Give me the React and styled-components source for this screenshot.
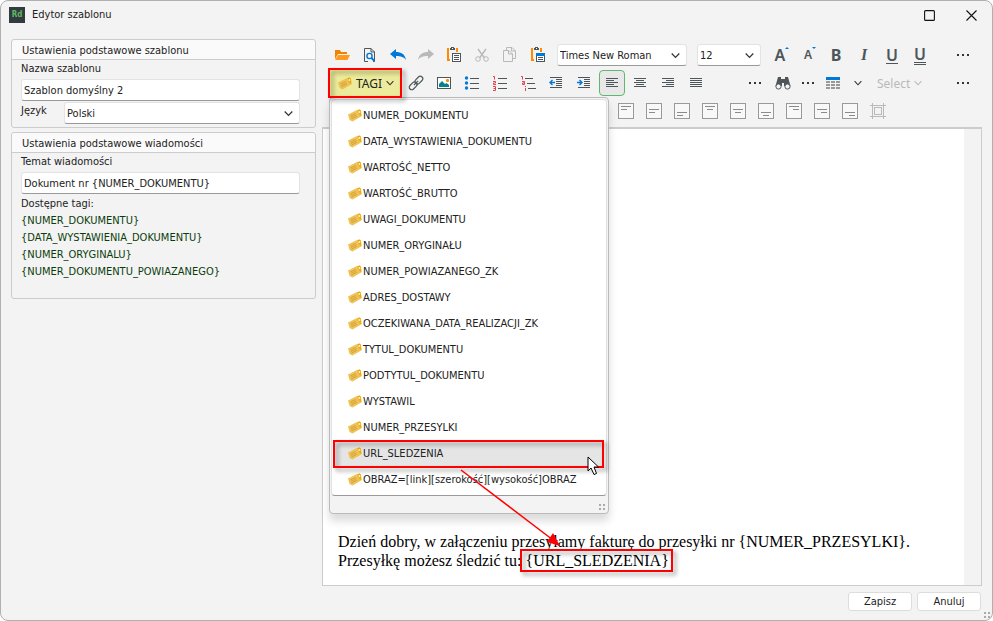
import React from 'react';
import styled, { createGlobalStyle, css } from 'styled-components';

const TAGS = [
  'NUMER_DOKUMENTU',
  'DATA_WYSTAWIENIA_DOKUMENTU',
  'WARTOŚĆ_NETTO',
  'WARTOŚĆ_BRUTTO',
  'UWAGI_DOKUMENTU',
  'NUMER_ORYGINAŁU',
  'NUMER_POWIAZANEGO_ZK',
  'ADRES_DOSTAWY',
  'OCZEKIWANA_DATA_REALIZACJI_ZK',
  'TYTUL_DOKUMENTU',
  'PODTYTUL_DOKUMENTU',
  'WYSTAWIL',
  'NUMER_PRZESYLKI',
  'URL_SLEDZENIA',
  'OBRAZ=[link][szerokość][wysokość]OBRAZ',
];

const SUBJECT_TAGS = [
  '{NUMER_DOKUMENTU}',
  '{DATA_WYSTAWIENIA_DOKUMENTU}',
  '{NUMER_ORYGINALU}',
  '{NUMER_DOKUMENTU_POWIAZANEGO}',
];

const ACTIVE_TAG = 'URL_SLEDZENIA';

const DARK = '#4d565b';
const BLUE = '#0078d7';
const ORANGE = '#ff8c00';
const PALE = '#b9b9b9';

/* icons */

const Svg = ({ w = 16, h = 16, children }) => (
  <svg width={w} height={h} viewBox={`0 0 ${w} ${h}`} fill="none" aria-hidden="true">
    {children}
  </svg>
);

const Lines = ({ rows, color = DARK }) =>
  rows.map(([x, y, w]) => <rect key={y} x={x} y={y} width={w} height="1" fill={color} />);

const OpenIcon = () => (
  <Svg>
    <path d="M1 12V3h5l1 2h6v2H4z" fill="#f08300" />
    <path d="M4 8h12l-2.500 5H1z" fill="#ff9a1f" />
  </Svg>
);

const PreviewIcon = () => (
  <Svg>
    <path d="M6 14.500H2.500V1.500H9L12.500 5v9.500H11" stroke={DARK} />
    <path d="M9 1.500V5h3.500" stroke={DARK} />
    <circle cx="7.500" cy="9" r="2.600" fill="#f3f3f3" stroke={BLUE} strokeWidth="1.400" />
    <path d="M9.500 11l3 3" stroke={BLUE} strokeWidth="1.800" />
  </Svg>
);

const UndoIcon = () => (
  <Svg>
    <path d="M0 7l6-5v3c5 0 9 2 10 8-2-3-5-4-10-4v3z" fill={BLUE} />
  </Svg>
);

const RedoIcon = () => (
  <Svg>
    <path d="M16 7l-6-5v3c-5 0-9 2-10 8 2-3 5-4 10-4v3z" fill={PALE} />
  </Svg>
);

const PasteIcon = ({ special }) => (
  <Svg>
    <path d="M3 2H2v11h2M10 2h1v3" stroke={ORANGE} strokeWidth="2" />
    <path d="M4 1h1V0h3v1h1v2H4z" fill={DARK} />
    <rect x="6" y="1" width="1" height="1" fill="#fff" />
    <rect x="6.500" y="6.500" width="8" height="8" fill="#fff" stroke={DARK} />
    {special && <rect x="6" y="6" width="9" height="3" fill={BLUE} />}
    <Lines rows={special ? [[8, 10, 5], [8, 12, 5]] : [[8, 8, 5], [8, 10, 5], [8, 12, 5]]} />
  </Svg>
);

const CutIcon = () => (
  <Svg>
    <path d="M4 2l6.500 9M12 2L5.500 11" stroke={PALE} strokeWidth="1.400" />
    <circle cx="4" cy="12" r="2.300" stroke={PALE} />
    <circle cx="12" cy="12" r="2.300" stroke={PALE} />
  </Svg>
);

const CopyIcon = () => (
  <Svg>
    <path d="M4.500 3.500V.5H10L13.500 4v7.500h-3" stroke={PALE} />
    <path d="M1.500 3.500H7L10.500 7v7.500h-9z" stroke={PALE} />
    <path d="M9.500.5V4h4M6.500 3.500V7h4" stroke={PALE} />
  </Svg>
);

const LinkIcon = () => (
  <Svg>
    <g transform="rotate(-45 8 8)" stroke={DARK} strokeWidth="1.200">
      <rect x="-.5" y="5.500" width="9" height="5" rx="2.500" />
      <rect x="7.500" y="5.500" width="9" height="5" rx="2.500" />
      <path d="M5 8h6" />
    </g>
  </Svg>
);

const ImageIcon = () => (
  <Svg>
    <rect x="1.500" y="2.500" width="13" height="11" fill="#fff" stroke={DARK} />
    <path d="M3 12V9l3-3 3 3 1.500-1 2.500 2v2z" fill="#02838a" />
    <rect x="10" y="4" width="3" height="3" rx="1" fill={ORANGE} />
  </Svg>
);

const BulletsIcon = () => (
  <Svg>
    {[3, 8, 13].map((y) => <circle key={y} cx="2.500" cy={y} r="1.700" fill={BLUE} />)}
    <Lines rows={[[6, 3, 9], [6, 8, 9], [6, 13, 9]]} />
  </Svg>
);

const NumbersIcon = () => (
  <Svg>
    <g stroke="#e0434f" strokeWidth="1">
      <path d="M1 1.500h1.500V4.500M1 6.500h2.500V8H1.500v1.500H4M1 11.500h2.500v4H1M1.500 13.500h2" />
    </g>
    <Lines rows={[[6, 3, 9], [6, 8, 9], [6, 13, 9]]} />
  </Svg>
);

const MultilevelIcon = () => (
  <Svg>
    <g stroke="#e0434f" strokeWidth="1">
      <path d="M1 1.500h1.500V4.500M2 6.500h2.500v3H2.500V8h2M5.500 11v1M5.500 13v3" />
    </g>
    <Lines rows={[[5, 3, 8], [7, 8, 8], [8, 13, 8]]} />
  </Svg>
);

const IndentIcon = ({ outdent }) => (
  <Svg>
    <Lines rows={[[2, 2, 12], [8, 4, 6], [8, 6, 6], [8, 8, 6], [8, 10, 6], [2, 12, 12]]} />
    <path
      d={outdent ? 'M2 7.500h5M4.500 5L2 7.500 4.500 10' : 'M1 7.500h5M3.500 5L6 7.500 3.500 10'}
      stroke={BLUE}
      strokeWidth="1.400"
    />
  </Svg>
);

const ALIGN_ROWS = {
  left: [[2, 3, 12], [2, 5, 8], [2, 7, 12], [2, 9, 8], [2, 11, 12]],
  center: [[2, 3, 12], [4, 5, 8], [2, 7, 12], [4, 9, 8], [2, 11, 12]],
  right: [[2, 3, 12], [6, 5, 8], [2, 7, 12], [6, 9, 8], [2, 11, 12]],
  justify: [[2, 3, 12], [2, 5, 12], [2, 7, 12], [2, 9, 12], [2, 11, 12]],
};

const AlignIcon = ({ align }) => (
  <Svg>
    <Lines rows={ALIGN_ROWS[align]} />
  </Svg>
);

const CellIcon = ({ h, v }) => {
  const top = { top: 3, middle: 6, bottom: 9 }[v];
  const x = { left: 3, center: 5, right: 7 }[h];
  return (
    <Svg>
      <rect x=".5" y=".5" width="15" height="15" fill="#f8f8f8" stroke="#999" />
      <Lines color="#8a8a8a" rows={[[3, top, 10], [x, top + 3, 6]]} />
    </Svg>
  );
};

const BorderIcon = () => (
  <Svg>
    <path d="M2.500 0v16M13.500 0v16M0 2.500h16M0 13.500h16" stroke={PALE} />
    <rect x="4.500" y="4.500" width="7" height="7" stroke={PALE} />
  </Svg>
);

const FindIcon = () => (
  <Svg>
    <path d="M3 2h3v2h4V2h3l2.500 9H9V8H7v3H.5z" fill={DARK} />
    <circle cx="3.500" cy="11.500" r="2.600" fill="#f3f3f3" stroke={DARK} />
    <circle cx="12.500" cy="11.500" r="2.600" fill="#f3f3f3" stroke={DARK} />
  </Svg>
);

const TableIcon = () => (
  <Svg>
    <rect x="1" y="2" width="14" height="3" fill={BLUE} />
    {[6, 9, 12].map((y) =>
      [1, 6, 11].map((x) => <rect key={`${x}-${y}`} x={x} y={y} width="4" height="2" fill="#999" />)
    )}
  </Svg>
);

const DotsIcon = () => (
  <Svg>
    <path d="M2 7h2v2H2zM7 7h2v2H7zM12 7h2v2h-2z" fill="#333" />
  </Svg>
);

const Chevron = ({ size = 9, color = '#333' }) => (
  <svg width={size} height={size} viewBox="0 0 9 9" fill="none" aria-hidden="true">
    <path d="M.7 2.500l3.800 4 3.800-4" stroke={color} strokeWidth="1.200" />
  </svg>
);

const TagIcon = () => (
  <Svg w={14} h={14}>
    <path d="M0 6.500L9 2l3.500 1L14 8l-9.500 5.500L1.500 12z" fill="#efc255" />
    <path d="M2.500 8l5-2.500M3 9.500l5.500-2.700M3.500 11L9 8.200" stroke="#cf9d35" strokeWidth=".8" />
    <path d="M9.500 2.500c1-1.500 3-1.500 3.500.5s0 3.500-.5 5c-1.500-1-1.500-4-3-5.500z" fill="#e8a70c" />
    <circle cx="11.500" cy="4" r=".9" fill="#fff3c4" />
  </Svg>
);

const GripIcon = () => (
  <Svg w={8} h={8}>
    <path d="M1 1h2v2H1zM5 1h2v2H5zM1 5h2v2H1zM5 5h2v2H5z" fill="#aaa" />
  </Svg>
);

/* page */

function SettingsPanel() {
  return (
    <Sidebar>
      <Group>
        <GroupTitle>Ustawienia podstawowe szablonu</GroupTitle>
        <GroupBody>
          <Label htmlFor="name">Nazwa szablonu</Label>
          <TextInput id="name" defaultValue="Szablon domyślny 2" />
          <LanguageRow>
            <Label htmlFor="language">Język</Label>
            <Combo $grow>
              <Select id="language" defaultValue="Polski">
                <option>Polski</option>
              </Select>
              <Chevron />
            </Combo>
          </LanguageRow>
        </GroupBody>
      </Group>
      <Group>
        <GroupTitle>Ustawienia podstawowe wiadomości</GroupTitle>
        <GroupBody $tall>
          <Label htmlFor="subject">Temat wiadomości</Label>
          <TextInput id="subject" defaultValue="Dokument nr {NUMER_DOKUMENTU}" />
          <TagsLabel>Dostępne tagi:</TagsLabel>
          {SUBJECT_TAGS.map((tag) => (
            <SubjectTag key={tag}>{tag}</SubjectTag>
          ))}
        </GroupBody>
      </Group>
    </Sidebar>
  );
}

function TagMenu() {
  return (
    <Menu>
      <MenuList>
        {TAGS.map((tag) => (
          <MenuItem key={tag} $active={tag === ACTIVE_TAG}>
            <TagIcon />
            {tag}
          </MenuItem>
        ))}
      </MenuList>
      <MenuFooter>
        <GripIcon />
      </MenuFooter>
      <Arrow width="106" height="84" viewBox="0 0 106 84" aria-hidden="true">
        <path d="M2 3l92 70" stroke="#f00" strokeWidth="1.500" />
        <path d="M101 79l-13-4 6-9z" fill="#f00" />
      </Arrow>
      <Pointer width="13" height="20" viewBox="0 0 13 20" aria-hidden="true">
        <path d="M1 1v14l3-3 3 6.500 2.500-1L7 11h4.500z" fill="#fff" stroke="#000" />
      </Pointer>
    </Menu>
  );
}

function Toolbar() {
  return (
    <Bars>
      <Bar>
        <Tool aria-label="Otwórz"><OpenIcon /></Tool>
        <Tool aria-label="Podgląd"><PreviewIcon /></Tool>
        <Tool aria-label="Cofnij"><UndoIcon /></Tool>
        <Tool aria-label="Ponów"><RedoIcon /></Tool>
        <Tool aria-label="Wklej"><PasteIcon /></Tool>
        <Tool aria-label="Wytnij"><CutIcon /></Tool>
        <Tool aria-label="Kopiuj"><CopyIcon /></Tool>
        <Tool aria-label="Wklej specjalnie"><PasteIcon special /></Tool>
        <Fonts>
          <Combo $width={130}>
            <Select aria-label="Czcionka" defaultValue="Times New Roman">
              <option>Times New Roman</option>
            </Select>
            <Chevron />
          </Combo>
          <Combo $width={64}>
            <Select aria-label="Rozmiar" defaultValue="12">
              <option>12</option>
            </Select>
            <Chevron />
          </Combo>
        </Fonts>
        <Tool aria-label="Powiększ"><Glyph>A<Tick /></Glyph></Tool>
        <Tool aria-label="Pomniejsz"><Glyph $small>A<Tick $down /></Glyph></Tool>
        <Tool aria-label="Pogrubienie"><Glyph $bold>B</Glyph></Tool>
        <Tool aria-label="Kursywa"><Glyph $italic>I</Glyph></Tool>
        <Tool aria-label="Podkreślenie"><Glyph $line="solid">U</Glyph></Tool>
        <Tool aria-label="Podwójne podkreślenie"><Glyph $line="double">U</Glyph></Tool>
        <Tool $last aria-label="Więcej"><DotsIcon /></Tool>
      </Bar>
      <Bar>
        <TagAnchor>
          <TagButton>
            <TagIcon />
            TAGI
            <Chevron size={8} />
          </TagButton>
          <TagMenu />
        </TagAnchor>
        <Tool aria-label="Odnośnik"><LinkIcon /></Tool>
        <Tool aria-label="Obraz"><ImageIcon /></Tool>
        <Tool aria-label="Punktory"><BulletsIcon /></Tool>
        <Tool aria-label="Numeracja"><NumbersIcon /></Tool>
        <Tool aria-label="Lista wielopoziomowa"><MultilevelIcon /></Tool>
        <Tool aria-label="Zmniejsz wcięcie"><IndentIcon outdent /></Tool>
        <Tool aria-label="Zwiększ wcięcie"><IndentIcon /></Tool>
        <Tool $selected aria-label="Do lewej"><AlignIcon align="left" /></Tool>
        <Tool aria-label="Do środka"><AlignIcon align="center" /></Tool>
        <Tool aria-label="Do prawej"><AlignIcon align="right" /></Tool>
        <Tool aria-label="Wyjustuj"><AlignIcon align="justify" /></Tool>
        <EditTools>
          <Tool aria-label="Więcej"><DotsIcon /></Tool>
          <Tool aria-label="Znajdź"><FindIcon /></Tool>
          <Tool $narrow aria-label="Więcej"><DotsIcon /></Tool>
          <Tool aria-label="Tabela"><TableIcon /></Tool>
          <Tool $narrow aria-label="Opcje tabeli"><Chevron size={8} /></Tool>
          <SelectButton disabled>
            Select
            <Chevron size={8} color={PALE} />
          </SelectButton>
        </EditTools>
        <Tool $last aria-label="Więcej"><DotsIcon /></Tool>
      </Bar>
      <Bar $indent>
        {['left', 'center', 'right'].map((h) =>
          ['top', 'middle', 'bottom'].map((v) => (
            <Tool key={`${h}-${v}`} aria-label={`${h} ${v}`}>
              <CellIcon h={h} v={v} />
            </Tool>
          ))
        )}
        <Tool aria-label="Obramowanie"><BorderIcon /></Tool>
      </Bar>
    </Bars>
  );
}

function App() {
  return (
    <Window>
      <GlobalStyle />
      <TitleBar>
        <Logo>Rd</Logo>
        <Title>Edytor szablonu</Title>
        <WindowButton aria-label="Maksymalizuj">
          <Svg w={11} h={11}>
            <rect x=".6" y=".6" width="9.800" height="9.800" rx="1" stroke="#111" strokeWidth="1.100" />
          </Svg>
        </WindowButton>
        <WindowButton aria-label="Zamknij">
          <Svg w={11} h={11}>
            <path d="M.5.5l10 10M10.500.5l-10 10" stroke="#111" strokeWidth="1.100" />
          </Svg>
        </WindowButton>
      </TitleBar>
      <Body>
        <SettingsPanel />
        <Editor>
          <Toolbar />
          <Page>
            <Content>
              Dzień dobry, w załączeniu przesyłamy fakturę do przesyłki nr {'{NUMER_PRZESYLKI}'}.
              <br />
              Przesyłkę możesz śledzić tu: <Marked>{'{URL_SLEDZENIA}'}</Marked>
            </Content>
            <ScrollTrack />
          </Page>
        </Editor>
      </Body>
      <Footer>
        <ActionButton>Zapisz</ActionButton>
        <ActionButton>Anuluj</ActionButton>
        <Corner>
          <GripIcon />
        </Corner>
      </Footer>
    </Window>
  );
}

export default App;

const uiFont = css`
  font-family: 'DejaVu Sans Condensed', 'Noto Sans', sans-serif;
  font-size: 11px;
  color: #222;
`;

const redFrame = css`
  content: '';
  position: absolute;
  border: 2px solid #f00;
  filter: drop-shadow(3px 3px 2px rgba(0, 0, 0, 0.4));
  pointer-events: none;
`;

const GlobalStyle = createGlobalStyle`
  * {
    box-sizing: border-box;
  }

  body {
    margin: 0;
    background: #fff;
    ${uiFont}
  }

  button, input, select {
    margin: 0;
    padding: 0;
    border: 0;
    background: none;
    outline: none;
    ${uiFont}
  }
`;

const Window = styled.div`
  display: flex;
  flex-direction: column;
  min-height: 100vh;
  background: #f3f3f3;
  border: 1px solid #b0b0b0;
  border-radius: 8px;
`;

const TitleBar = styled.header`
  display: flex;
  align-items: center;
  height: 28px;
  padding: 0 0 0 8px;
`;

const Logo = styled.div`
  width: 16px;
  height: 16px;
  background: #343b40;
  color: #5fb760;
  font-size: 8px;
  font-weight: 700;
  line-height: 16px;
  text-align: center;
`;

const Title = styled.div`
  flex: 1;
  margin-left: 7px;
  font-size: 11px;
  line-height: 14px;
`;

const WindowButton = styled.button`
  display: flex;
  align-items: center;
  justify-content: center;
  width: 42px;
  height: 28px;
`;

const Body = styled.div`
  display: flex;
  flex: 1;
  gap: 6px;
  padding: 10px 10px 0;
`;

const Sidebar = styled.aside`
  flex: none;
  width: 305px;
`;

const Group = styled.section`
  margin-bottom: 4px;
  border: 1px solid #ccc;
  border-radius: 3px;
`;

const GroupTitle = styled.div`
  height: 20px;
  padding-left: 10px;
  border-bottom: 1px solid #ccc;
  border-radius: 3px 3px 0 0;
  background: #fafafa;
  line-height: 21px;
`;

const GroupBody = styled.div`
  padding: 0 15px ${(p) => (p.$tall ? 18 : 3)}px 9px;
`;

const Label = styled.label`
  display: block;
  height: 19px;
  line-height: 17px;
`;

const field = css`
  width: 100%;
  height: 22px;
  border: 1px solid #e3e3e3;
  border-bottom-color: #999;
  border-radius: 3px;
  background: #fff;
`;

const TextInput = styled.input`
  ${field}
  padding: 0 2px;
`;

const LanguageRow = styled.div`
  display: grid;
  grid-template-columns: 43px 1fr;
  margin-top: 1px;
`;

const Combo = styled.div`
  display: flex;
  align-items: center;
  position: relative;
  width: ${(p) => (p.$grow ? 'auto' : `${p.$width}px`)};

  svg {
    position: absolute;
    right: 7px;
    pointer-events: none;
  }
`;

const Select = styled.select`
  ${field}
  padding: 0 2px;
  appearance: none;
`;

const TagsLabel = styled.div`
  margin-top: 1px;
  line-height: 17px;
`;

const SubjectTag = styled.div`
  line-height: 17px;
  color: #0b3d0b;
`;

const Editor = styled.main`
  display: flex;
  flex-direction: column;
  flex: 1;
  min-width: 0;
`;

const Bars = styled.div`
  padding: 2px 5px 2px 6px;
`;

const Bar = styled.div`
  display: flex;
  align-items: center;
  height: 28px;
  padding-left: ${(p) => (p.$indent ? 284 : 0)}px;
`;

const Tool = styled.button`
  display: flex;
  flex: none;
  align-items: center;
  justify-content: center;
  width: ${(p) => (p.$narrow ? 22 : 28)}px;
  height: 28px;
  margin-left: ${(p) => (p.$last ? 'auto' : 0)};

  ${(p) =>
    p.$selected &&
    css`
      width: 26px;
      height: 26px;
      margin: 0 1px;
      border: 1px solid #5fb76f;
      border-radius: 4px;
      background: #e8e8e8;
    `}
`;

const Fonts = styled.div`
  display: flex;
  gap: 10px;
  margin: 0 5px;
`;

const EditTools = styled.div`
  display: flex;
  align-items: center;
  margin-left: 31px;
`;

const SelectButton = styled.button`
  display: flex;
  align-items: center;
  gap: 4px;
  height: 28px;
  padding-left: 8px;
  color: ${PALE};
  font-family: 'Noto Sans', sans-serif;
  font-size: 12px;
`;

const Glyph = styled.span`
  position: relative;
  color: ${DARK};
  font-family: ${(p) => (p.$italic ? "'Liberation Serif', serif" : "'Noto Sans', sans-serif")};
  font-size: ${(p) => (p.$small ? 12 : 16)}px;
  font-style: ${(p) => (p.$italic ? 'italic' : 'normal')};
  font-weight: ${(p) => (p.$bold ? 700 : 600)};
  line-height: 16px;
  border-bottom: ${(p) => (p.$line === 'double' ? `3px double ${DARK}` : p.$line ? `1px solid ${DARK}` : 0)};
`;

const Tick = styled.i`
  position: absolute;
  top: 0;
  right: -4px;
  border: 2px solid transparent;
  border-top: ${(p) => (p.$down ? `2px solid ${BLUE}` : 0)};
  border-bottom: ${(p) => (p.$down ? 0 : `2px solid ${BLUE}`)};
`;

const TagAnchor = styled.div`
  position: relative;
  width: 74px;
`;

const TagButton = styled.button`
  display: flex;
  align-items: center;
  gap: 4px;
  width: 100%;
  height: 28px;
  padding-left: 10px;
  background: #ebeb9b;
  font-family: 'Noto Sans', sans-serif;
  font-size: 12px;

  &::after {
    ${redFrame}
    inset: -1px 0;
    z-index: 3;
  }
`;

const Menu = styled.div`
  position: absolute;
  top: 28px;
  left: 1px;
  z-index: 2;
  width: 280px;
  padding: 1px 1px 0;
  border: 1px solid #bbb;
  border-radius: 4px;
  background: #f3f3f3;
  box-shadow: 0 7px 9px rgba(0, 0, 0, 0.14);
`;

const MenuList = styled.div`
  padding: 2px 2px 3px;
  border: 1px solid #e0e0e0;
  border-bottom-color: #999;
  border-radius: 4px;
  background: #fff;
`;

const MenuItem = styled.button`
  display: flex;
  align-items: center;
  gap: 1px;
  position: relative;
  width: 100%;
  height: 26px;
  padding-left: 14px;
  background: ${(p) => (p.$active ? '#e5e5e5' : 'none')};

  &::after {
    ${(p) => p.$active && redFrame}
    inset: 0 0 -2px -1px;
  }
`;

const MenuFooter = styled.div`
  display: flex;
  align-items: center;
  justify-content: flex-end;
  height: 17px;
  padding: 5px 1px 0 0;
`;

const Arrow = styled.svg`
  position: absolute;
  top: 369px;
  left: 129px;
`;

const Pointer = styled.svg`
  position: absolute;
  top: 358px;
  left: 257px;
`;

const Page = styled.div`
  display: flex;
  flex: 1;
  border: 1px solid #ccc;
  border-top-width: 2px;
  background: #fff;
`;

const Content = styled.div`
  flex: 1;
  align-self: flex-end;
  padding: 0 15px 15px;
  color: #000;
  font-family: 'Liberation Serif', serif;
  font-size: 16px;
  line-height: 19px;
`;

const Marked = styled.span`
  position: relative;

  &::after {
    ${redFrame}
    inset: -3px -4px -3px -6px;
  }
`;

const ScrollTrack = styled.div`
  width: 17px;
  background: #f3f3f3;
`;

const Footer = styled.footer`
  display: flex;
  gap: 5px;
  justify-content: flex-end;
  position: relative;
  padding: 6px 11px 9px;
`;

const ActionButton = styled.button`
  width: 64px;
  height: 19px;
  border: 1px solid #ddd;
  border-radius: 3px;
  background: #fff;
`;

const Corner = styled.div`
  display: flex;
  position: absolute;
  right: 1px;
  bottom: 1px;
`;
